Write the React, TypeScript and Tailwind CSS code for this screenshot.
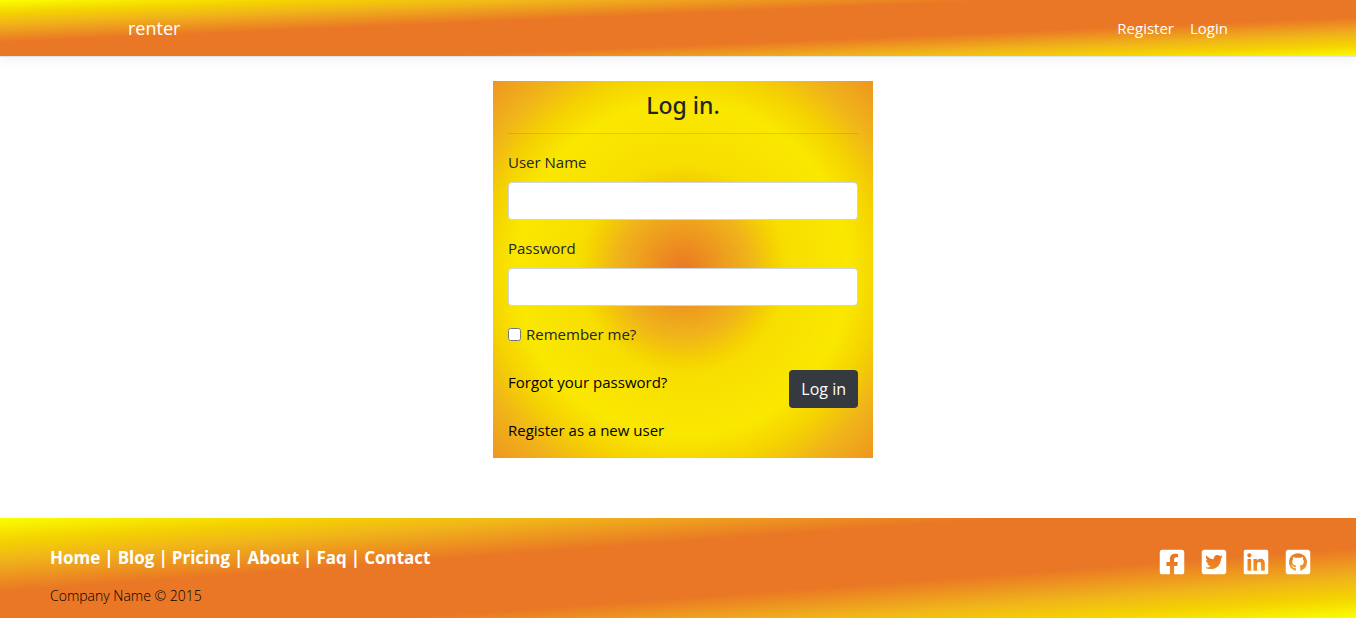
import React from "react";
import { FaFacebookSquare, FaGithubSquare, FaLinkedin, FaTwitterSquare } from "react-icons/fa";

const footerLinks = ["Home", "Blog", "Pricing", "About", "Faq", "Contact"];

const socialLinks = [
  { name: "Facebook", Icon: FaFacebookSquare },
  { name: "Twitter", Icon: FaTwitterSquare },
  { name: "LinkedIn", Icon: FaLinkedin },
  { name: "GitHub", Icon: FaGithubSquare },
];

const bandGradient =
  "bg-[linear-gradient(to_bottom_right,#faff00_0%,#f5d400_11%,#f0b41a_21%,#ea7725_37%,#ea7725_65%,#f0b41a_80%,#f5d400_90%,#faff00_100%)]";

const cardGradient =
  "bg-[radial-gradient(circle,#ea7725_0%,#f0b41a_25%,#f5d400_35%,#f7de00_39%,#fae800_62%,#f5d400_73%,#f0b41a_85%,#ee961f_100%)]";

function Field({ id, label, type }: { id: string; label: string; type: string }) {
  return (
    <div className="mb-4 flex flex-col gap-2">
      <label htmlFor={id} className="leading-6">{label}</label>
      <input
        id={id}
        type={type}
        className="h-[38px] w-full rounded border border-[#ced4da] bg-white px-3 outline-none focus:border-[#80bdff]"
      />
    </div>
  );
}

export default function App() {
  return (
    <div className="flex min-h-screen flex-col bg-white font-['Segoe_UI','Open_Sans','Noto_Sans',sans-serif] text-[15px] text-[#212529]">
      <header className={`border-b border-[#dee2e6] bg-origin-border shadow-[0_4px_12px_rgba(0,0,0,0.05)] ${bandGradient}`}>
        <nav className="mx-auto flex h-14 max-w-[1100px] items-center justify-between text-white">
          <a href="#home" className="text-lg">renter</a>
          <div className="flex gap-4">
            <a href="#register">Register</a>
            <a href="#login">Login</a>
          </div>
        </nav>
      </header>

      <main className="flex justify-center pt-6 pb-[60px] pl-[10px]">
        <form className={`w-full max-w-[380px] px-[15px] pt-2 pb-4 ${cardGradient}`} onSubmit={(e) => e.preventDefault()}>
          <h1 className="text-center font-['Noto_Sans','Open_Sans',sans-serif] text-[23px] leading-8 font-medium">Log in.</h1>
          <hr className="mt-3 mb-4 border-black/10" />
          <Field id="username" label="User Name" type="text" />
          <Field id="password" label="Password" type="password" />
          <div className="flex items-center gap-[5px]">
            <input id="remember" type="checkbox" className="size-[13px]" />
            <label htmlFor="remember" className="leading-6">Remember me?</label>
          </div>
          <div className="mt-6 flex items-start justify-between text-black">
            <div className="flex flex-col gap-6 leading-6">
              <a href="#forgot">Forgot your password?</a>
              <a href="#register">Register as a new user</a>
            </div>
            <button type="submit" className="h-[38px] rounded bg-[#343a40] px-3 text-base text-white">Log in</button>
          </div>
        </form>
      </main>

      <footer className={`mt-auto flex h-[100px] items-start justify-between pt-[26px] pr-[44px] pl-[50px] ${bandGradient}`}>
        <div>
          <nav className="flex gap-1 text-[17px] leading-7 font-bold text-white">
            {footerLinks.map((link, i) => (
              <React.Fragment key={link}>
                {i > 0 && <span>|</span>}
                <a href={`#${link.toLowerCase()}`}>{link}</a>
              </React.Fragment>
            ))}
          </nav>
          <p className="mt-3 text-sm leading-6 font-light text-black">Company Name © 2015</p>
        </div>
        <div className="flex gap-[14px] pt-1 text-white">
          {socialLinks.map(({ name, Icon }) => (
            <a key={name} href={`#${name.toLowerCase()}`} aria-label={name}>
              <Icon size={28} />
            </a>
          ))}
        </div>
      </footer>
    </div>
  );
}
